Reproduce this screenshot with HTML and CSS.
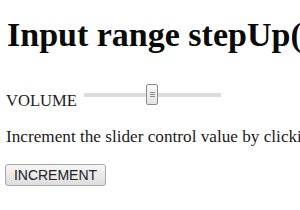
FILE: index.html
```html
<!DOCTYPE html>
<html>
<head>
<meta charset="utf-8">
<link rel="stylesheet" href="styles.css">
</head>
<body>
<h1 class="title">Input range stepUp() Method</h1>
<div class="row">
  <span class="label">VOLUME</span>
  <input class="slider" type="range" min="0" max="100" value="50">
</div>
<p class="note">Increment the slider control value by clicking the button.</p>
<button class="btn" type="button">INCREMENT</button>
</body>
</html>
```

FILE: styles.css
```css
html, body {
  margin: 0;
  padding: 0;
  background: #fff;
  overflow: hidden;
}
body {
  padding-left: 6px;
  font-family: "Liberation Serif", "Times New Roman", serif;
  color: #111;
  width: 1000px;
}
.title {
  margin: 16px 0 0 1px;
  font-size: 34px;
  line-height: 38px;
  font-weight: bold;
  white-space: nowrap;
  color: #0a0a0a;
}
.row {
  display: flex;
  align-items: flex-start;
  margin-top: 30px;
  height: 27px;
}
.label {
  padding-top: 7px;
  font-size: 16.6px;
  line-height: 20px;
  color: #222;
}
.slider {
  -webkit-appearance: none;
  appearance: none;
  margin: 0 0 0 7px;
  padding: 0;
  width: 137px;
  height: 21px;
  background: transparent;
}
.slider::-webkit-slider-runnable-track {
  height: 4px;
  background: #dcdcdc;
  border: none;
}
.slider::-webkit-slider-thumb {
  -webkit-appearance: none;
  appearance: none;
  width: 12px;
  height: 21px;
  margin-top: -9px;
  box-sizing: border-box;
  border: 1px solid #8c8c8c;
  border-radius: 2px;
  background:
    linear-gradient(#8a8a8a, #8a8a8a) center 7px / 5px 1px no-repeat,
    linear-gradient(#8a8a8a, #8a8a8a) center 9px / 5px 1px no-repeat,
    linear-gradient(#8a8a8a, #8a8a8a) center 11px / 5px 1px no-repeat,
    linear-gradient(#f7f7f7, #e4e4e4);
}
.note {
  margin: 16px 0 0 0;
  font-size: 17.2px;
  line-height: 20px;
  white-space: nowrap;
  color: #1a1a1a;
}
.btn {
  display: block;
  margin: 17px 0 0 -1px;
  width: 101px;
  height: 22px;
  padding: 0;
  font-family: "Liberation Sans", Arial, sans-serif;
  font-size: 14px;
  color: #222;
  border: 1px solid #a8a8a8;
  border-radius: 3px;
  background: linear-gradient(#f6f6f6, #dddddd);
}
```
